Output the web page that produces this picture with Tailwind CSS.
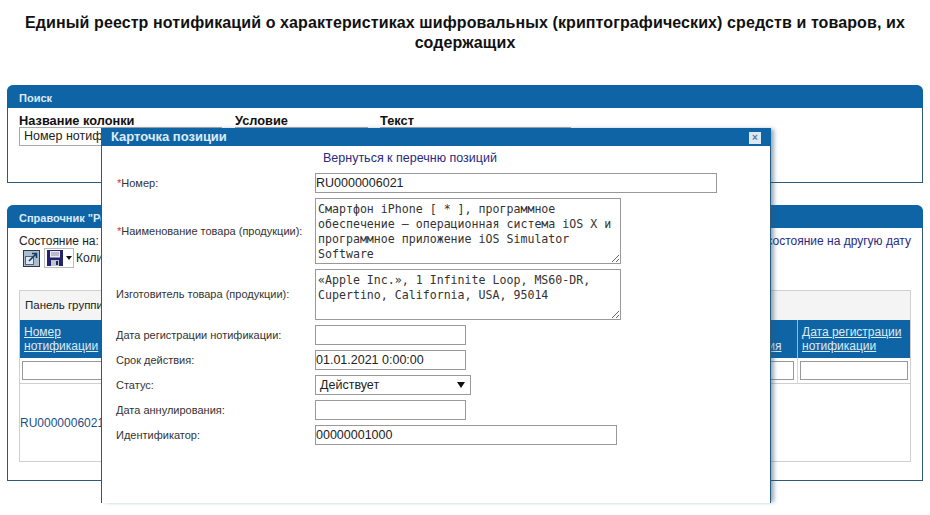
<!DOCTYPE html>
<html lang="en">
  <head>
    <meta charset="UTF-8" />
    <title>Реестр нотификаций</title>
    <script src="https://cdn.jsdelivr.net/npm/@tailwindcss/browser@4"></script>
  </head>
  <body class="relative h-[515px] w-[930px] overflow-hidden bg-white font-['Liberation_Sans',sans-serif] text-[12px] text-[#222]">
    <h1 class="mx-auto w-[900px] pt-[13px] text-center text-[16px] leading-[20px] font-bold tracking-[0.1px] text-[#111]">
      Единый реестр нотификаций о характеристиках шифровальных (криптографических) средств и товаров, их содержащих
    </h1>

    <!-- search panel -->
    <section class="mt-[32px] ml-[7px] h-[98px] w-[916px] rounded-t-[8px] border-x border-b border-[#2c5a7c]">
      <div class="-mx-px flex h-[23px] items-center rounded-t-[6px] bg-[#0f64a5] pt-[3px] pl-[12px] text-[11px] font-bold text-[#dcebf7]">Поиск</div>
      <div class="flex pt-[6px] pl-[11px] text-[12.8px] leading-[13px] font-bold text-[#111]">
        <div class="w-[216px]">Название колонки</div>
        <div class="w-[145px]">Условие</div>
        <div>Текст</div>
      </div>
      <div class="flex pl-[11px]">
        <div class="flex h-[19px] w-[203px] items-center border border-[#aaa] pl-[4px] text-[12.5px]">Номер нотификации</div>
        <div class="ml-[13px] h-[19px] w-[133px] border border-[#aaa]"></div>
        <div class="ml-[12px] h-[19px] w-[191px] border border-[#aaa]"></div>
      </div>
    </section>

    <!-- directory panel -->
    <section class="mt-[22px] ml-[7px] h-[276px] w-[916px] rounded-t-[8px] border-x border-b border-[#2c5a7c]">
      <div class="-mx-px flex h-[23px] items-center rounded-t-[6px] bg-[#0f64a5] pt-[3px] pl-[12px] text-[11px] font-bold text-[#dcebf7]">Справочник "Реестр нотификаций"</div>
      <div class="flex justify-between pt-[6px] pr-[11px] pl-[11px] text-[12px] leading-[14px]">
        <span>Состояние на:</span>
        <a class="text-[#2a2a80]">Показать состояние на другую дату</a>
      </div>
      <div class="flex h-[20px] items-center pl-[15px]">
        <svg width="17" height="17" viewBox="0 0 17 17">
          <rect x="0.5" y="0.5" width="16" height="16" fill="#a9bcd0" stroke="#2f3844" />
          <rect x="2.5" y="6.5" width="8" height="8" fill="#dfe7ef" stroke="#4d6680" />
          <path d="M6 11 13 4M9 3.5h4.5V8" stroke="#163d66" stroke-width="1.6" fill="none" />
        </svg>
        <div class="ml-[4px] flex h-[20px] w-[30px] items-center border border-[#bbb] pl-[2px]">
          <svg width="16" height="16" viewBox="0 0 16 16">
            <rect width="16" height="16" fill="#23236b" />
            <rect x="3" y="1" width="10" height="6.5" fill="#e8e8ee" />
            <path d="M4 3h8M4 5h8" stroke="#8a8aa8" stroke-width="1" />
            <rect x="4" y="10" width="8" height="6" fill="#c4c4cc" />
            <rect x="9" y="11" width="2" height="4" fill="#23236b" />
          </svg>
          <span class="ml-[3px] h-0 w-0 border-x-[3px] border-t-[4px] border-x-transparent border-t-[#111]"></span>
        </div>
        <span class="ml-[2px]">Количество</span>
      </div>

      <div class="mt-[22px] ml-[11px] w-[892px] border border-[#d0d0d0]">
        <div class="flex h-[29px] items-center bg-[#f4f4f4] pl-[5px] text-[11.5px]">Панель группировки</div>
        <div class="flex h-[38px] bg-[#0f64a5] text-[12px] leading-[14px] text-[#dcebf7] underline">
          <div class="w-[706px] pt-[5px] pl-[4px]">Номер<br />нотификации</div>
          <div class="w-[71px] pt-[5px] pl-[4px]">Срок<br />действия</div>
          <div class="w-[113px] border-l border-[#8ec0e6] pt-[5px] pl-[4px]">Дата регистрации<br />нотификации</div>
        </div>
        <div class="flex h-[26px] border-b border-[#d0d0d0]">
          <div class="w-[706px] pt-[3px] pl-[2px]"><div class="h-[19px] w-[702px] border border-[#999]"></div></div>
          <div class="w-[71px] pt-[3px]"><div class="h-[19px] w-[68px] border border-[#999]"></div></div>
          <div class="w-[113px] border-l border-[#d8d8d8] pt-[3px] pl-[2px]"><div class="h-[19px] w-[108px] border border-[#999]"></div></div>
        </div>
        <div class="flex h-[77px] items-center text-[12px] text-[#1d4f86]">RU0000006021</div>
      </div>
    </section>

    <!-- modal card -->
    <div class="absolute top-[128px] left-[101px] h-[375px] w-[670px] border-x border-[#2c5a7c] bg-white shadow-[4px_0_4px_-1px_rgba(44,90,124,0.5)]">
      <div class="-mx-px flex h-[18px] items-center justify-between bg-[#0f64a5] pr-[10px] pl-[10px] text-[13px] font-bold text-[#dcebf7]">
        <span>Карточка позиции</span>
        <span class="mt-[2px] flex h-[12px] w-[12px] items-center justify-center bg-[#dbe9f5] text-[10px] leading-none text-[#5a7a9a]">×</span>
      </div>
      <div class="pt-[5px] pl-[221px] text-[12.5px] leading-[14px] text-[#2a2a80]">Вернуться к перечню позиций</div>

      <div class="grid grid-cols-[199px_auto] justify-start gap-y-[5px] pt-[8px] pl-[14px] text-[11px] text-[#333]">
        <div class="flex items-center"><span class="pl-[1px] text-[#c33]">*</span>Номер:</div>
        <div class="h-[20px] w-[402px] border border-[#999] text-[12.5px] leading-[18px] text-[#222]">RU0000006021</div>

        <div class="flex items-center"><span class="pl-[1px] text-[#c33]">*</span>Наименование товара (продукции):</div>
        <textarea class="block h-[66px] w-[306px] resize border border-[#999] px-[2px] pt-[3px] font-['DejaVu_Sans_Mono',monospace] text-[11.6px] leading-[15px] text-[#333]">Смартфон iPhone [ * ], программное обеспечение – операционная система iOS X и программное приложение iOS Simulator Software</textarea>

        <div class="flex items-center">Изготовитель товара (продукции):</div>
        <textarea class="block h-[51px] w-[306px] resize border border-[#999] px-[2px] pt-[3px] font-['DejaVu_Sans_Mono',monospace] text-[11.6px] leading-[15px] text-[#333]">«Apple Inc.», 1 Infinite Loop, MS60-DR, Cupertino, California, USA, 95014</textarea>

        <div class="flex items-center">Дата регистрации нотификации:</div>
        <div class="h-[20px] w-[151px] border border-[#999]"></div>

        <div class="flex items-center">Срок действия:</div>
        <div class="h-[20px] w-[151px] border border-[#999] text-[12.5px] leading-[18px] text-[#222]">01.01.2021 0:00:00</div>

        <div class="flex items-center">Статус:</div>
        <div class="flex h-[20px] w-[156px] items-center justify-between border border-[#999] pr-[5px] pl-[4px] text-[12.5px] text-[#222]">
          <span>Действует</span>
          <span class="h-0 w-0 border-x-[4px] border-t-[6px] border-x-transparent border-t-[#111]"></span>
        </div>

        <div class="flex items-center">Дата аннулирования:</div>
        <div class="h-[20px] w-[151px] border border-[#999]"></div>

        <div class="flex items-center">Идентификатор:</div>
        <div class="h-[20px] w-[302px] border border-[#999] text-[12.5px] leading-[18px] text-[#222]">00000001000</div>
      </div>
    </div>
  </body>
</html>
